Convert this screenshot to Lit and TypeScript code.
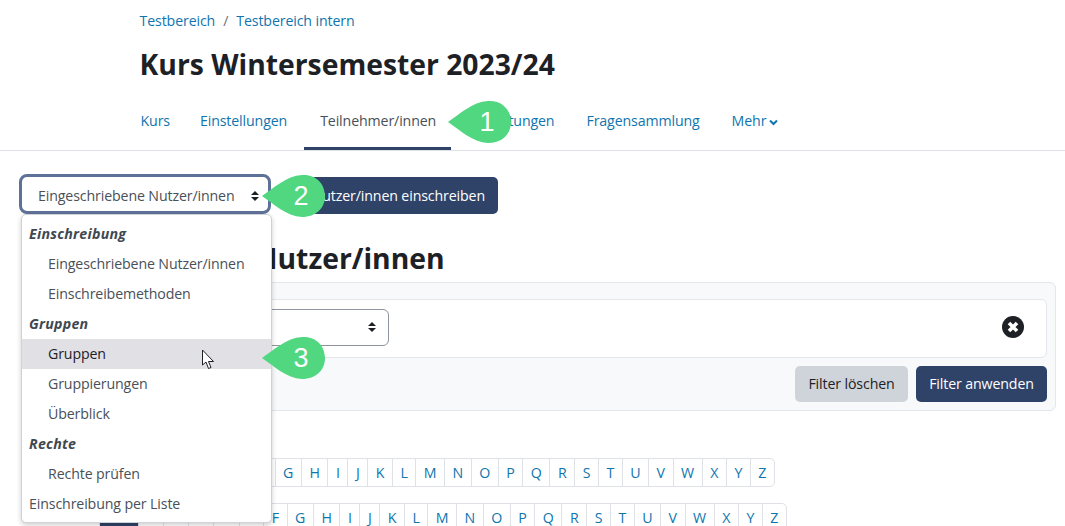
import { LitElement, html, css, svg } from "lit";
import { customElement } from "lit/decorators.js";

const letters = "ABCDEFGHIJKLMNOPQRSTUVWXYZ".split("");

@customElement("app-root")
export class AppRoot extends LitElement {
  static styles = css`
    :host {
      display: block;
      position: relative;
      width: 1065px;
      height: 526px;
      overflow: hidden;
      background: #fff;
      font-family: "Open Sans", "Liberation Sans", sans-serif;
      font-size: 14.2px;
      letter-spacing: -0.13px;
      color: #1d2125;
    }
    a { color: #0f75ae; text-decoration: none; }
    .head { padding: 11px 0 0 139.5px; }
    .crumb { display: flex; gap: 8px; height: 20px; line-height: 20px; color: #6a737b; }
    h1 { margin: 0; font-size: 28.3px; letter-spacing: 0; font-weight: 700; line-height: 38px; padding-top: 14px; height: 38px; }
    .tabs {
      display: flex;
      margin-top: 19px;
      padding-left: 124.5px;
      height: 48px;
      border-bottom: 1px solid #dee2e6;
    }
    .tab { padding: 9px 16px 0; height: 39px; line-height: 20px; }
    .tab.first { padding-right: 14px; }
    .tab.second { padding-right: 17px; }
    .tab.on { color: #495057; border-bottom: 3px solid #2f4369; height: 36px; padding-right: 15px; }
    .tab svg { margin-left: 3px; }
    .bar { display: flex; align-items: flex-end; padding: 23px 0 0 19px; height: 40px; }
    .sel {
      box-sizing: border-box;
      width: 252px; height: 40px;
      border: 3px solid #5e7198;
      border-radius: 8px;
      background: #fff;
      display: flex; align-items: center; justify-content: space-between;
      padding: 3px 9px 0 16px;
      color: #495057;
    }
    .btn {
      background: #2f4369; color: #fff; border-radius: 5px;
      height: 37px; line-height: 37px; padding: 0 13px;
      box-sizing: border-box;
    }
    .enrol { margin-left: 27px; width: 200px; white-space: nowrap; overflow: hidden; display: flex; justify-content: flex-end; }
    h2 { margin: 0; padding: 24px 0 0 23px; height: 38px; line-height: 40px; font-size: 28.3px; letter-spacing: 0; word-spacing: -7px; font-weight: 700; white-space: nowrap; }
    .panel {
      margin: 6px 9px 0 24px;
      box-sizing: border-box;
      height: 129px;
      background: #f8f9fa;
      border: 1px solid #e3e6ea;
      border-radius: 6px;
      padding: 16px 8px 0 4px;
    }
    .inner {
      box-sizing: border-box;
      height: 59px;
      background: #fff;
      border: 1px solid #e3e6ea;
      border-radius: 6px;
      display: flex; align-items: center; justify-content: space-between;
      padding: 0 22px 3px 8px;
    }
    .fsel {
      box-sizing: border-box;
      width: 351px; height: 37px;
      border: 1px solid #8f959e;
      border-radius: 6px;
      background: #fff;
      display: flex; align-items: center; justify-content: flex-end;
      padding-right: 12px;
    }
    .actions { display: flex; justify-content: flex-end; gap: 8px; margin-top: 8px; }
    .actions .btn { height: 36px; line-height: 36px; }
    .muted { background: #ced4da; color: #1d2125; width: 113px; text-align: center; padding: 0; }
    .apply { width: 131px; text-align: center; padding: 0; }
    .row { display: flex; align-items: flex-start; margin-left: 24px; height: 45px; }
    .row.first { margin-top: 47px; }
    .label { width: 63px; flex: none; }
    .row.second .label { width: 75px; }
    .pages { display: flex; border: 1px solid #dee2e6; border-radius: 5px; height: 29px; box-sizing: border-box; background: #fff; }
    .pages a {
      display: block; padding: 0 7.5px; line-height: 27px; font-size: 14.2px; letter-spacing: 0;
      border-left: 1px solid #dee2e6;
    }
    .pages a:first-child { border-left: 0; }
    .pages a.act { background: #2f4369; color: #fff; width: 23px; text-align: center; }
    .menu {
      position: absolute; left: 21px; top: 214px; width: 251px; height: 309px;
      box-sizing: border-box;
      background: #fff;
      border: 1px solid #cfd2d8;
      border-radius: 5px;
      box-shadow: 0 2px 5px rgba(0,0,0,.2);
      padding: 4px 0;
      color: #495057;
      overflow: hidden;
    }
    .menu div { height: 30px; line-height: 30px; padding-left: 26px; white-space: nowrap; }
    .menu div.g { padding-left: 7px; font-weight: 700; font-style: italic; color: #3f4850; letter-spacing: 0.25px; }
    .menu div.t { padding-left: 7px; }
    .menu div.hl { background: #e0e0e5; color: #1d2125; }
    .tear { position: absolute; width: 64px; height: 44px; }
    .tear svg { position: absolute; inset: 0; }
    .tear span {
      position: absolute; left: 22px; right: 8px; top: 0; text-align: center;
      color: #fff; font: 27px/44px "Liberation Sans", sans-serif; letter-spacing: 0;
    }
    .cursor { position: absolute; left: 201px; top: 349px; }
  `;

  tear(n: string, x: number, y: number) {
    return html`<div class="tear" style="left:${x}px;top:${y}px">
      <svg width="64" height="44" viewBox="0 0 64 44"><path d="M0 22 C12 14 24 2 40 1 C54 0 63 10 63 22 C63 34 54 43 40 43 C24 42 12 30 0 22Z" fill="#50d780"/></svg>
      <span>${n}</span>
    </div>`;
  }

  row(cls: string, label: string) {
    return html`<div class="row ${cls}">
      <div class="label">${label}</div>
      <div class="pages">
        <a class="act">Alle</a>
        ${letters.map((l) => html`<a>${l}</a>`)}
      </div>
    </div>`;
  }

  render() {
    const caret = svg`<path d="M4 0 L8 4 H0Z M0 6 H8 L4 10Z" fill="#1d2125"/>`;
    return html`
      <div class="head">
        <div class="crumb"><a>Testbereich</a><span>/</span><a>Testbereich intern</a></div>
        <h1>Kurs Wintersemester 2023/24</h1>
      </div>
      <nav class="tabs">
        <a class="tab first">Kurs</a>
        <a class="tab second">Einstellungen</a>
        <a class="tab on">Teilnehmer/innen</a>
        <a class="tab">Bewertungen</a>
        <a class="tab">Fragensammlung</a>
        <a class="tab">Mehr<svg width="9" height="7" viewBox="0 0 9 7"><path d="M1 1.5 L4.5 5 L8 1.5" fill="none" stroke="#0f75ae" stroke-width="2"/></svg></a>
      </nav>
      <div class="bar">
        <div class="sel"><span>Eingeschriebene Nutzer/innen</span><svg width="8" height="10" viewBox="0 0 8 10">${caret}</svg></div>
        <div class="btn enrol">Nutzer/innen einschreiben</div>
      </div>
      <h2>Eingeschriebene Nutzer/innen</h2>
      <div class="panel">
        <div class="inner">
          <div class="fsel"><svg width="8" height="10" viewBox="0 0 8 10">${caret}</svg></div>
          <svg width="22" height="22" viewBox="0 0 22 22"><circle cx="11" cy="11" r="11" fill="#1d2125"/><path d="M7 7 L15 15 M15 7 L7 15" stroke="#fff" stroke-width="3.6"/></svg>
        </div>
        <div class="actions">
          <div class="btn muted">Filter löschen</div>
          <div class="btn apply">Filter anwenden</div>
        </div>
      </div>
      ${this.row("first", "Vorname")}
      ${this.row("second", "Nachname")}
      <div class="menu">
        <div class="g">Einschreibung</div>
        <div>Eingeschriebene Nutzer/innen</div>
        <div>Einschreibemethoden</div>
        <div class="g">Gruppen</div>
        <div class="hl">Gruppen</div>
        <div>Gruppierungen</div>
        <div>Überblick</div>
        <div class="g">Rechte</div>
        <div>Rechte prüfen</div>
        <div class="t">Einschreibung per Liste</div>
      </div>
      ${this.tear("1", 448, 100)}
      ${this.tear("2", 262, 174)}
      ${this.tear("3", 262, 336)}
      <svg class="cursor" width="16" height="22" viewBox="0 0 16 22"><path d="M1.5 1 V16 L5 13 L7.5 19.5 L10 18.5 L7.5 12.5 H12.5Z" fill="#fff" stroke="#1d2125" stroke-width="1"/></svg>
    `;
  }
}
